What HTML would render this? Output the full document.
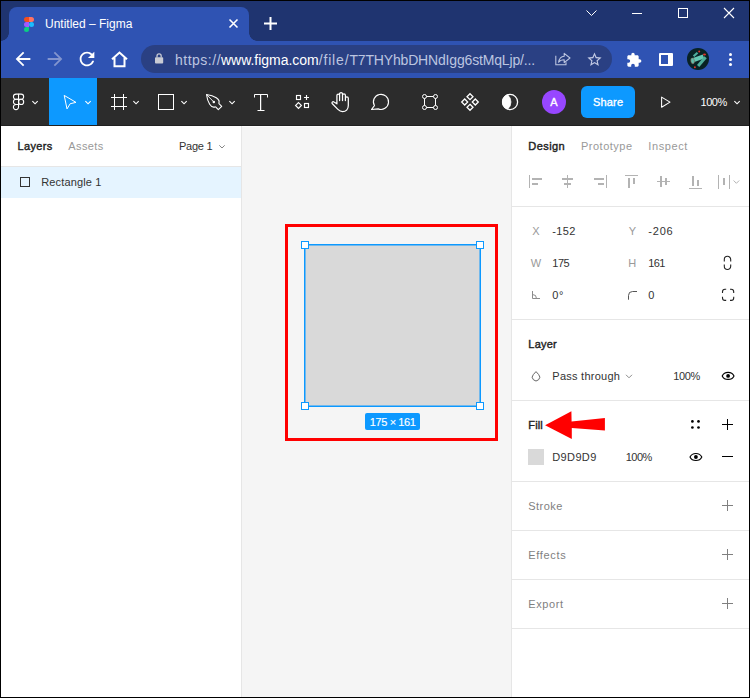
<!DOCTYPE html>
<html>
<head>
<meta charset="utf-8">
<title>Untitled – Figma</title>
<style>
*{box-sizing:border-box;margin:0;padding:0}
html,body{width:750px;height:698px;overflow:hidden;background:#000}
body{font-family:"Liberation Sans",sans-serif;position:relative}
.abs{position:absolute}
#win{position:absolute;left:1px;top:1px;width:748px;height:696px;background:#fff;overflow:hidden}
/* coordinates inside #win are offset by -1,-1 from page coords */
#titlebar{left:0;top:0;width:748px;height:40px;background:#1f3470}
#tab{left:8px;top:6px;width:240px;height:34px;background:#2f53b3;border-radius:8px 8px 0 0}
#tab:before,#tab:after{content:"";position:absolute;bottom:0;width:8px;height:8px}
#tab:before{left:-8px;background:radial-gradient(circle at 0 0,transparent 7.5px,#2f53b3 8px)}
#tab:after{right:-8px;background:radial-gradient(circle at 100% 0,transparent 7.5px,#2f53b3 8px)}
#navbar{left:0;top:40px;width:748px;height:37px;background:#2f53b3}
#url{left:140px;top:44px;width:471px;height:28px;border-radius:14px;background:#2a4083}
.ct{color:#fff;font-size:12px;white-space:nowrap}
#ftool{left:0;top:77px;width:748px;height:48px;background:#2c2c2c}
#active{left:48px;top:77px;width:48px;height:48px;background:#0d99ff}
#left{left:0;top:125px;width:241px;height:571px;background:#fff;border-right:1px solid #e6e6e6}
#canvas{left:241px;top:125px;width:269px;height:571px;background:#f5f5f5}
#right{left:510px;top:125px;width:238px;height:571px;background:#fff;border-left:1px solid #e6e6e6}
.t{position:absolute;font-size:11px;color:#333;white-space:nowrap;line-height:14px}
.b{color:#222;-webkit-text-stroke:0.400px #222}
.g{color:#999}
.hr{position:absolute;left:511px;width:237px;height:1px;background:#e6e6e6}
.s{color:#7f7f7f}
.hd{width:8px;height:8px;background:#fff;border:1px solid #0d99ff}
svg{position:absolute;overflow:visible}
</style>
</head>
<body>
<div id="win">
<div id="titlebar" class="abs"></div>
<div id="tab" class="abs"></div>
<div id="navbar" class="abs"></div>
<div id="url" class="abs"></div>
<div id="ftool" class="abs"></div>
<div id="active" class="abs"></div>
<div id="left" class="abs"></div>
<div id="canvas" class="abs"></div>
<div id="right" class="abs"></div>

<!-- tab contents -->
<svg style="left:23px;top:16px" width="10" height="15" viewBox="0 0 10 15">
<path d="M0 2.5A2.5 2.5 0 0 1 2.5 0H5v5H2.5A2.5 2.5 0 0 1 0 2.5z" fill="#f24e1e"/>
<path d="M5 0h2.5a2.5 2.5 0 0 1 0 5H5z" fill="#ff7262"/>
<path d="M0 7.5A2.5 2.5 0 0 1 2.5 5H5v5H2.5A2.5 2.5 0 0 1 0 7.5z" fill="#a259ff"/>
<circle cx="7.5" cy="7.5" r="2.5" fill="#1abcfe"/>
<path d="M0 12.5A2.5 2.5 0 0 1 2.5 10H5v2.5a2.5 2.5 0 0 1-5 0z" fill="#0acf83"/>
</svg>
<div class="abs ct" id="tabtitle" style="left:44px;top:15px;line-height:16px;">Untitled – Figma</div>
<svg style="left:227px;top:17px" width="11" height="11" viewBox="0 0 11 11"><path d="M1.5 1.5l8 8M9.5 1.5l-8 8" stroke="#fff" stroke-width="1.6" fill="none"/></svg>
<svg style="left:263px;top:16px" width="13" height="13" viewBox="0 0 13 13"><path d="M6.5 0v13M0 6.5h13" stroke="#fff" stroke-width="2" fill="none"/></svg>
<!-- window controls -->
<svg style="left:585px;top:9px" width="11" height="6" viewBox="0 0 11 6"><path d="M0.5 0.5l5 5 5-5" stroke="#fff" stroke-width="1" fill="none"/></svg>
<div class="abs" style="left:631px;top:12px;width:10px;height:1px;background:#fff"></div>
<div class="abs" style="left:677px;top:7px;width:10px;height:10px;border:1px solid #fff"></div>
<svg style="left:723px;top:7px" width="10" height="10" viewBox="0 0 10 10"><path d="M0 0l10 10M10 0L0 10" stroke="#fff" stroke-width="1.1" fill="none"/></svg>
<!-- nav icons -->
<svg style="left:11px;top:47px" width="22" height="22" viewBox="0 0 24 24"><path fill="#fff" d="M20 11H7.83l5.59-5.59L12 4l-8 8 8 8 1.41-1.41L7.83 13H20v-2z"/></svg>
<svg style="left:43px;top:47px" width="22" height="22" viewBox="0 0 24 24"><path fill="#8395cf" d="M12 4l-1.41 1.41L16.17 11H4v2h12.170l-5.58 5.59L12 20l8-8z"/></svg>
<svg style="left:75px;top:47px" width="22" height="22" viewBox="0 0 24 24"><path fill="#fff" d="M17.65 6.35C16.2 4.9 14.21 4 12 4c-4.42 0-7.99 3.58-7.99 8s3.570 8 7.990 8c3.730 0 6.840-2.550 7.730-6h-2.080c-.82 2.330-3.040 4-5.650 4-3.310 0-6-2.690-6-6s2.690-6 6-6c1.660 0 3.140.69 4.220 1.780L13 11h7V4l-2.350 2.350z"/></svg>
<svg style="left:109.500px;top:49.500px" width="17" height="17" viewBox="0 0 17 17"><path d="M1 8.300L8.500 1.500 16 8.300M3.500 6.800V15.300H13.500V6.800" stroke="#fff" stroke-width="2" fill="none" stroke-linejoin="miter"/></svg>
<!-- url -->
<svg style="left:154.200px;top:51.800px" width="8.200" height="11" viewBox="0 0 9 12"><rect x="0" y="4.500" width="9" height="7" rx="1" fill="#c9cbd4"/><path d="M2.200 5V3.200a2.300 2.300 0 0 1 4.600 0V5" stroke="#c9cbd4" stroke-width="1.400" fill="none"/></svg>
<div class="abs" id="urltext" style="left:174px;top:50px;font-size:14px;line-height:18px;color:#bcc5e0;white-space:nowrap;letter-spacing:0.030px"><span style="letter-spacing:0.500px">https://</span><span style="color:#fff;letter-spacing:-0.030px">www.figma.com</span><span style="letter-spacing:0.850px">/file/</span><span id="urlrest" style="letter-spacing:-0.170px">T7THYhbDHNdIgg6stMqLjp/...</span></div>
<svg style="left:554px;top:51px" width="16" height="14" viewBox="0 0 16 14"><path d="M0.800 3.800V12.800H11V10.300" stroke="#bfc7e2" stroke-width="1.050" fill="none"/><path d="M3.600 10.300C4.200 6.600 6.200 4.400 9.200 4.200V1.300L15 6 9.200 10.700V7.800C6.800 7.800 4.800 8.600 3.600 10.300z" stroke="#bfc7e2" stroke-width="1.050" fill="none" stroke-linejoin="round"/></svg>
<svg style="left:585px;top:50px" width="17" height="17" viewBox="0 0 24 24"><path fill="#c3cae4" d="M22 9.240l-7.190-.62L12 2 9.190 8.630 2 9.240l5.460 4.730L5.820 21 12 17.270 18.180 21l-1.630-7.030L22 9.240zM12 15.400l-3.760 2.270 1-4.280-3.320-2.880 4.380-.38L12 6.100l1.710 4.040 4.380.38-3.320 2.880 1 4.280L12 15.400z"/></svg>
<svg style="left:625px;top:51px" width="16" height="16" viewBox="0 0 24 24"><path fill="#fff" d="M20.500 11H19V7c0-1.100-.9-2-2-2h-4V3.500C13 2.120 11.880 1 10.500 1S8 2.120 8 3.500V5H4c-1.100 0-1.990.9-1.990 2v3.800H3.500c1.490 0 2.700 1.210 2.700 2.700s-1.210 2.700-2.700 2.700H2V20c0 1.100.9 2 2 2h3.800v-1.500c0-1.490 1.210-2.700 2.700-2.700 1.490 0 2.700 1.210 2.700 2.700V22H17c1.100 0 2-.9 2-2v-4h1.500c1.380 0 2.500-1.120 2.500-2.500S21.880 11 20.500 11z"/></svg>
<div class="abs" style="left:658px;top:52px;width:14px;height:13px;border:2px solid #fff;border-right-width:5px;border-radius:1px"></div>
<svg style="left:686px;top:47px" width="22" height="22" viewBox="0 0 22 22"><circle cx="11" cy="10.900" r="11" fill="#082225"/><g stroke-linecap="butt" fill="none"><path d="M6.600 8.300L10.500 4.700" stroke="#4fae9c" stroke-width="2.200"/><path d="M4.500 12.700L16.500 8.400" stroke="#66c9b4" stroke-width="4.200"/><path d="M11.100 18L18.600 9.200" stroke="#4fae9c" stroke-width="3"/></g><ellipse cx="5.600" cy="12.900" rx="1.800" ry="3" fill="#5fc0ac" stroke="#8a4a40" stroke-width="0.500" transform="rotate(-8 5.600 12.900)"/><circle cx="12.200" cy="3.600" r="1" fill="#e0352b"/><ellipse cx="17.500" cy="6.500" rx="1.500" ry="1" fill="#e0352b"/><circle cx="7.900" cy="19.300" r="1" fill="#e0352b"/></svg>
<div class="abs" style="left:728px;top:52px;width:3px;height:3px;border-radius:50%;background:#fff;box-shadow:0 5px 0 #fff,0 10px 0 #fff"></div>
<!--CHROME_END-->

<!-- figma logo menu -->
<svg style="left:0;top:0" width="748" height="696" viewBox="1 1 748 696"><g fill="none" stroke="#fff" stroke-width="1.100"><path d="M18.550 94.150H16.020a2.575 2.575 0 0 0 0 5.150H18.550z"/><path d="M18.550 94.150H21.080a2.575 2.575 0 0 1 0 5.150H18.550"/><path d="M18.550 99.300H16.020a2.575 2.575 0 0 0 0 5.150H18.550z"/><circle cx="21.100" cy="101.875" r="2.575"/><path d="M18.550 104.450H16.020a2.575 2.575 0 1 0 2.530 2.575z"/></g></svg>
<svg style="left:31px;top:100px" width="7" height="4" viewBox="0 0 7 4"><path d="M0.400 0.200L3.050 2.800 5.700 0.200" stroke="#fff" stroke-width="1.150" fill="none"/></svg>
<!-- move -->
<svg style="left:62px;top:93px" width="14" height="16" viewBox="0 0 14 16"><path d="M1.200 1.400L13 8.400 7.200 9.700 4 14.900z" stroke="#fff" stroke-width="1" fill="none" stroke-linejoin="miter"/></svg>
<svg style="left:84px;top:100px" width="7" height="4" viewBox="0 0 7 4"><path d="M0.400 0.200L3.050 2.800 5.700 0.200" stroke="#fff" stroke-width="1.150" fill="none"/></svg>
<!-- frame -->
<svg style="left:110px;top:93px" width="16" height="16" viewBox="0 0 16 16"><path d="M3.500 0v16M12.500 0v16M0 3.500h16M0 12.500h16" stroke="#fff" stroke-width="1" fill="none"/></svg>
<svg style="left:132px;top:100px" width="7" height="4" viewBox="0 0 7 4"><path d="M0.400 0.200L3.050 2.800 5.700 0.200" stroke="#fff" stroke-width="1.150" fill="none"/></svg>
<!-- rect -->
<div class="abs" style="left:157px;top:93px;width:16px;height:16px;border:1px solid #fff"></div>
<svg style="left:180px;top:100px" width="7" height="4" viewBox="0 0 7 4"><path d="M0.400 0.200L3.050 2.800 5.700 0.200" stroke="#fff" stroke-width="1.150" fill="none"/></svg>
<!-- pen -->
<svg style="left:205px;top:93px" width="16" height="16" viewBox="0 0 16 16"><g stroke="#fff" stroke-width="1.100" fill="none" stroke-linejoin="round"><path d="M12.700 9.400C15 5 8 1.500 0.500 0.500C1.500 8 5 15 9.400 12.700"/><path d="M9.400 12.700L12.300 15.600 15.700 12.300 12.700 9.400"/><path d="M0.500 0.500L7.500 7.700" stroke-width="0.900"/></g><circle cx="7.800" cy="8" r="1.250" fill="#fff"/></svg>
<svg style="left:228px;top:100px" width="7" height="4" viewBox="0 0 7 4"><path d="M0.400 0.200L3.050 2.800 5.700 0.200" stroke="#fff" stroke-width="1.150" fill="none"/></svg>
<!-- text -->
<svg style="left:253px;top:93px" width="14" height="17" viewBox="0 0 14 17"><path d="M0.500 3.500V0.500H13.500V3.500M3.500 16.500H10.500" stroke="#fff" stroke-width="1" fill="none"/><path d="M6.600 0.500V16.500" stroke="#fff" stroke-width="1.250" fill="none"/></svg>
<!-- resources -->
<svg style="left:294px;top:93px" width="15" height="15" viewBox="0 0 15 15"><g stroke="#fff" stroke-width="1.150" fill="none"><rect x="1.500" y="1.500" width="4" height="4"/><path d="M11.500 1v5M9 3.500h5"/><path d="M3.500 8.550L6.400 11.450 3.500 14.350 0.600 11.450z" stroke-width="1.200"/><rect x="9.500" y="9.500" width="4" height="4"/></g></svg>
<!-- hand -->
<svg style="left:0;top:0" width="748" height="696" viewBox="1 1 748 696"><path d="M336.900 103.800V95.600a1.350 1.350 0 0 1 2.700 0V94.050a1.450 1.450 0 0 1 2.900 0V95.250a1.450 1.450 0 0 1 2.900 0V98.350a1.450 1.450 0 0 1 2.900 0V105.500C348.300 109.300 345.800 111.600 342.600 111.600C340.600 111.600 339.200 110.700 337.900 109.400L332.370 103.770A1.200 1.200 0 0 1 333.970 101.980L336.900 103.800M339.600 95.600V100.600M342.500 94.050V100.600M345.400 95.250V100.600" stroke="#fff" stroke-width="1.250" fill="none" stroke-linecap="round" stroke-linejoin="round"/></svg>
<!-- comment -->
<svg style="left:0;top:0" width="748" height="696" viewBox="1 1 748 696"><path d="M374.400 105.600A7.550 7.550 0 1 1 378.200 108.900L371.500 109.500Z" stroke="#fff" stroke-width="1.150" fill="none" stroke-linejoin="round"/></svg>
<!-- edit object -->
<svg style="left:421px;top:93px" width="16" height="16" viewBox="0 0 16 16"><g stroke="#fff" stroke-width="1" fill="none"><circle cx="2.500" cy="2.500" r="2"/><circle cx="13.500" cy="2.500" r="2"/><circle cx="2.500" cy="13.500" r="2"/><circle cx="13.500" cy="13.500" r="2"/><path d="M4.500 2.500h7M4.500 13.500h7M2.500 4.500v7M13.500 4.500v7"/></g></svg>
<!-- component -->
<svg style="left:460px;top:92px" width="18" height="18" viewBox="0 0 18 18"><g stroke="#fff" stroke-width="1.300" fill="none"><path d="M9 0.700L12 3.700 9 6.700 6 3.700z"/><path d="M3.700 6L6.700 9 3.700 12 0.700 9z"/><path d="M14.300 6L17.300 9 14.300 12 11.300 9z"/><path d="M9 11.300L12 14.300 9 17.300 6 14.300z"/></g></svg>
<!-- mask -->
<svg style="left:0;top:0" width="748" height="696" viewBox="1 1 748 696"><circle cx="510.050" cy="102" r="7.550" stroke="#fff" stroke-width="1.300" fill="none"/><path d="M507.600 94.850A7.550 7.550 0 0 0 507.600 109.150A9.300 9.300 0 0 0 507.600 94.850z" fill="#fff" stroke="#fff" stroke-width="0.800"/></svg>
<!-- avatar -->
<div class="abs" style="left:541px;top:89px;width:24px;height:24px;border-radius:50%;background:#9747ff;color:#fff;font-size:11px;-webkit-text-stroke:0.350px #fff;text-align:center;line-height:24px">A</div>
<!-- share -->
<div class="abs" style="left:580px;top:85px;width:54px;height:32px;border-radius:6px;background:#0d99ff;color:#fff;font-size:11px;-webkit-text-stroke:0.350px #fff;text-align:center;line-height:32px"><span id="share" style="letter-spacing:0.200px;margin-left:0.200px">Share</span></div>
<!-- play -->
<svg style="left:660px;top:96px" width="10" height="11" viewBox="0 0 10 11"><path d="M0.600 0.100L9 5.150 0.600 10.200z" stroke="#fff" stroke-width="1.050" fill="none" stroke-linejoin="round"/></svg>
<div class="abs" id="zoom" style="left:699.500px;top:94px;color:#fff;font-size:11px;letter-spacing:-0.450px;line-height:14px;white-space:nowrap">100%</div>
<svg style="left:733px;top:100px" width="7" height="4" viewBox="0 0 7 4"><path d="M0.400 0.200L3.050 2.800 5.700 0.200" stroke="#fff" stroke-width="1.150" fill="none"/></svg><!--FIGTOOLS_END-->
<div class="t b" id="l_layers" style="left:16.5px;top:138.0px;letter-spacing:0.34px">Layers</div>
<div class="t g" id="l_assets" style="left:67.3px;top:138.0px;letter-spacing:0.40px">Assets</div>
<div class="t " id="l_page" style="left:178.0px;top:138.0px;letter-spacing:-0.24px">Page 1</div>
<svg style="left:217.500px;top:143.500px" width="6" height="4" viewBox="0 0 6 4"><path d="M0.300 0.300L3 3 5.700 0.300" stroke="#777" stroke-width="0.900" fill="none"/></svg>
<div class="abs" style="left:0;top:165px;width:240px;height:1px;background:#e6e6e6"></div>
<div class="abs" style="left:0;top:166px;width:240px;height:31px;background:#e5f4ff"></div>
<div class="abs" style="left:19px;top:176px;width:10px;height:10px;border:1px solid #333"></div>
<div class="t " id="l_rect" style="left:40.3px;top:174.0px;letter-spacing:0.13px">Rectangle 1</div>
<!--LEFT_END-->

<div class="abs" style="left:284px;top:223px;width:213px;height:217px;border:3px solid #f00"></div>
<div class="abs" style="left:304px;top:244px;width:175px;height:161px;background:#d9d9d9"></div>
<svg style="left:0;top:0" width="748" height="696" viewBox="1 1 748 696"><rect x="304.750" y="244.750" width="175.500" height="161.500" fill="none" stroke="#0d99ff" stroke-width="1.500"/></svg>
<div class="abs hd" style="left:300px;top:240px"></div>
<div class="abs hd" style="left:475px;top:240px"></div>
<div class="abs hd" style="left:300px;top:401px"></div>
<div class="abs hd" style="left:475px;top:401px"></div>
<div class="abs" style="left:364px;top:412px;width:55px;height:17px;border-radius:2px;background:#0d99ff;color:#fff;font-size:11px;-webkit-text-stroke:0.150px #fff;line-height:19px;text-align:center;white-space:nowrap"><span id="c_dim" style="letter-spacing:-0.400px;margin-left:0.400px">175 × 161</span></div>
<div class="abs" style="left:0;top:124px;width:748px;height:1px;background:#202020"></div>
<div class="abs" style="left:241px;top:125px;width:269px;height:1px;background:#fdfdfd"></div>
<!--CANVAS_END-->
<div class="t b" id="r_design" style="left:527.3px;top:138.0px;letter-spacing:0.43px">Design</div>
<div class="t g" id="r_proto" style="left:580.0px;top:138.0px;letter-spacing:0.49px">Prototype</div>
<div class="t g" id="r_inspect" style="left:647.3px;top:138.0px;letter-spacing:0.59px">Inspect</div>
<div class="hr" style="top:205px"></div>
<div class="hr" style="top:318px"></div>
<div class="hr" style="top:399px"></div>
<div class="hr" style="top:480px"></div>
<div class="hr" style="top:529px"></div>
<div class="hr" style="top:578px"></div>
<div class="hr" style="top:627px"></div>
<div class="t g" id="r_x" style="left:531.3px;top:223.0px;">X</div>
<div class="t " id="r_xv" style="left:551.3px;top:223.0px;letter-spacing:0.33px">-152</div>
<div class="t g" id="r_y" style="left:627.7px;top:223.0px;">Y</div>
<div class="t " id="r_yv" style="left:647.3px;top:223.0px;letter-spacing:0.79px">-206</div>
<div class="t g" id="r_w" style="left:529.7px;top:255.0px;">W</div>
<div class="t " id="r_wv" style="left:551.3px;top:255.0px;letter-spacing:-0.48px">175</div>
<div class="t g" id="r_h" style="left:627.3px;top:255.0px;">H</div>
<div class="t " id="r_hv" style="left:647.3px;top:255.0px;letter-spacing:-0.60px">161</div>
<div class="t " id="r_rot" style="left:551.3px;top:287.0px;letter-spacing:0.47px">0°</div>
<div class="t " id="r_rad" style="left:647.3px;top:287.0px;">0</div>
<div class="t b" id="r_layer" style="left:527.3px;top:336.3px;letter-spacing:0.22px">Layer</div>
<div class="t " id="r_pass" style="left:551.3px;top:368.0px;letter-spacing:0.26px">Pass through</div>
<div class="t " id="r_op" style="left:672.3px;top:368.0px;letter-spacing:-0.38px">100%</div>
<div class="t b" id="r_fill" style="left:527.3px;top:417.0px;letter-spacing:0.11px">Fill</div>
<div class="t " id="r_hex" style="left:551.3px;top:449.3px;letter-spacing:0.36px">D9D9D9</div>
<div class="t " id="r_fop" style="left:624.7px;top:449.3px;letter-spacing:-0.51px">100%</div>
<div class="t s" id="r_stroke" style="left:527.3px;top:498.0px;letter-spacing:0.44px">Stroke</div>
<div class="t s" id="r_effects" style="left:527.3px;top:547.0px;letter-spacing:0.66px">Effects</div>
<div class="t s" id="r_export" style="left:527.3px;top:596.0px;letter-spacing:0.58px">Export</div>
<div class="abs" style="left:527px;top:448px;width:16px;height:16px;background:#d9d9d9"></div>
<!--RIGHT_END-->
<svg style="left:0;top:0" width="748" height="696" viewBox="1 1 748 696" shape-rendering="auto">
<g fill="#b3b3b3" shape-rendering="crispEdges">
<!-- align left -->
<rect x="529" y="175" width="1" height="13"/><rect x="532" y="178" width="10" height="2"/><rect x="532" y="183" width="6" height="2"/>
<!-- align hcenter -->
<rect x="567" y="175" width="1" height="13"/><rect x="562" y="178" width="11" height="2"/><rect x="564" y="183" width="7" height="2"/>
<!-- align right -->
<rect x="606" y="175" width="1" height="13"/><rect x="594" y="178" width="10" height="2"/><rect x="598" y="183" width="6" height="2"/>
<!-- align top -->
<rect x="625" y="175" width="13" height="1"/><rect x="628" y="178" width="2" height="10"/><rect x="633" y="178" width="2" height="6"/>
<!-- align vcenter -->
<rect x="657" y="181" width="13" height="1"/><rect x="660" y="176" width="2" height="11"/><rect x="665" y="178" width="2" height="7"/>
<!-- align bottom -->
<rect x="689" y="188" width="13" height="1"/><rect x="692" y="176" width="2" height="10"/><rect x="697" y="180" width="2" height="6"/>
<!-- distribute -->
<rect x="718" y="175" width="1" height="14"/><rect x="729" y="175" width="1" height="14"/><rect x="723" y="178" width="2" height="7"/>
</g>
<path d="M733.600 180.500L736.400 183.300 739.200 180.500" stroke="#b3b3b3" stroke-width="1" fill="none"/>
<!-- constrain -->
<g stroke="#222" stroke-width="1.100" fill="none">
<path d="M724.300 261.500V259.500a3.200 3.200 0 0 1 6.400 0V261.500"/><path d="M724.300 264.500V266.300a3.200 3.200 0 0 0 6.400 0V264.500"/>
<!-- independent corners -->
<path d="M722.500 293V291.800a2.500 2.500 0 0 1 2.500-2.500H726.200"/><path d="M730 289.300H731.200a2.500 2.500 0 0 1 2.500 2.500V293"/>
<path d="M733.700 296.700V297.900a2.500 2.500 0 0 1-2.500 2.500H730"/><path d="M726.200 300.400H725a2.500 2.500 0 0 1-2.500-2.500V296.700"/>
</g>
<!-- angle -->
<path d="M532.500 291V298.500H540" stroke="#8c8c8c" stroke-width="1" fill="none"/><path d="M532.500 294.500A4 4 0 0 1 536.500 298.500" stroke="#8c8c8c" stroke-width="1" fill="none"/>
<!-- radius -->
<path d="M628.500 299.700V295.500A4 4 0 0 1 632.500 291.500H637" stroke="#555" stroke-width="1" fill="none"/>
<!-- drop -->
<path d="M536 371.600L538.700 374.600A3.700 3.700 0 1 1 533.300 374.600z" stroke="#666" stroke-width="1" fill="none" stroke-linejoin="round"/>
<!-- pass through chevron -->
<path d="M626 374.800L629 377.800 632 374.800" stroke="#8c8c8c" stroke-width="1" fill="none"/>
<!-- eye 1 -->
<path d="M722.200 375.900C724.500 371.200 731.700 371.200 734 375.900 731.700 380.600 724.500 380.600 722.200 375.900z" stroke="#000" stroke-width="1.150" fill="none"/><circle cx="728.100" cy="375.900" r="1.900" fill="#000"/>
<!-- dots -->
<g fill="#000"><circle cx="692.400" cy="421.400" r="1.350"/><circle cx="698.500" cy="421.400" r="1.350"/><circle cx="692.400" cy="427.500" r="1.350"/><circle cx="698.500" cy="427.500" r="1.350"/></g>
<!-- plus / minus -->
<g fill="#000" shape-rendering="crispEdges"><rect x="722" y="424" width="11" height="1"/><rect x="727" y="419" width="1" height="11"/><rect x="722" y="456" width="11" height="1"/></g>
<!-- eye 2 -->
<path d="M690 457C692.300 452.300 699.500 452.300 701.800 457 699.500 461.700 692.300 461.700 690 457z" stroke="#000" stroke-width="1.150" fill="none"/><circle cx="695.900" cy="457" r="1.900" fill="#000"/>
<!-- gray pluses -->
<g fill="#808080" shape-rendering="crispEdges">
<rect x="722" y="505" width="11" height="1"/><rect x="727" y="500" width="1" height="11"/>
<rect x="722" y="554" width="11" height="1"/><rect x="727" y="549" width="1" height="11"/>
<rect x="722" y="603" width="11" height="1"/><rect x="727" y="598" width="1" height="11"/>
</g>
<!-- red arrow -->
<path d="M545.100 425.200L571.400 411.200L571.600 421.500L604.900 418V430.400L571.800 427.900V438.900z" fill="#f00"/>
</svg>
<!--RICONS_END-->
</div>
</body>
</html>
